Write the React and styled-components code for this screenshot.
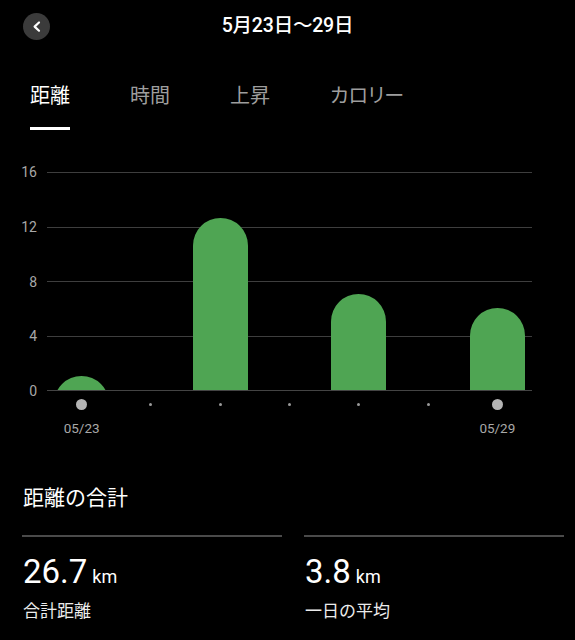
import React from 'react';
import styled, { createGlobalStyle } from 'styled-components';

const GlobalStyle = createGlobalStyle`
    body {
        margin: 0;
        background: #000;
        color: #fff;
        font-family: Roboto, "Noto Sans CJK JP", sans-serif;
    }
`;

const Page = styled.div`
    width: 575px;
    height: 640px;
    overflow: hidden;
    background: #000;
`;

const Header = styled.div`
    display: grid;
    grid-template-columns: 1fr auto 1fr;
    align-items: center;
    height: 52px;
    padding: 0 22px;
`;

const BackButton = styled.button`
    width: 27px;
    height: 27px;
    padding: 0;
    border: none;
    border-radius: 50%;
    background: #3b3b3b;
    display: flex;
    align-items: center;
    justify-content: center;
    margin-left: 1px;
`;

const Title = styled.div`
    font-size: 19.5px;
    font-weight: 500;
    line-height: 26px;
    letter-spacing: -0.2px;
`;

const Tabs = styled.div`
    display: flex;
    gap: 60px;
    padding-left: 30px;
    margin-top: 32px;
`;

const Tab = styled.div`
    font-size: 20px;
    line-height: 24px;
    padding-bottom: 19px;
    color: ${p => (p.$active ? '#fff' : '#9e9e9e')};
    border-bottom: 3px solid ${p => (p.$active ? '#fff' : 'transparent')};
    font-feature-settings: "palt";
`;

const Chart = styled.div`
    display: grid;
    grid-template-columns: 47px 485px;
    margin-top: 42px;
`;

const YAxis = styled.div`
    display: flex;
    flex-direction: column;
    justify-content: space-between;
    align-items: flex-end;
    height: 235px;
    margin: -8px 0;
    padding-right: 10px;
`;

const YLabel = styled.div`
    font-size: 14px;
    line-height: 16px;
    color: #a8a8a8;
`;

const Plot = styled.div`
    display: grid;
    height: 219px;
`;

const GridLayer = styled.div`
    grid-area: 1 / 1;
    display: flex;
    flex-direction: column;
    border-bottom: 1px solid #444;
`;

const GridBand = styled.div`
    flex: 1;
    border-top: 1px solid #3e3e3e;
`;

const BarLayer = styled.div`
    grid-area: 1 / 1;
    display: grid;
    grid-template-columns: repeat(7, 1fr);
    align-items: end;
    padding-bottom: 1px;
`;

const BarSlot = styled.div`
    display: flex;
    justify-content: center;
    align-items: flex-end;
`;

const BarClip = styled.div`
    width: 55px;
    overflow: hidden;
`;

const BarFill = styled.div`
    width: 55px;
    border-radius: 27.5px 27.5px 0 0;
    background: #4fa553;
`;

const Spacer = styled.div``;

const AxisRow = styled.div`
    grid-column: 2;
    display: grid;
    grid-template-columns: repeat(7, 1fr);
    align-items: center;
    justify-items: center;
    height: 12px;
    margin-top: 7px;
`;

const Dot = styled.div`
    width: ${p => (p.$big ? '11px' : '3px')};
    height: ${p => (p.$big ? '11px' : '3px')};
    border-radius: 50%;
    background: ${p => (p.$big ? '#b4b4b4' : '#9a9a9a')};
`;

const DateRow = styled.div`
    grid-column: 2;
    display: grid;
    grid-template-columns: repeat(7, 1fr);
    justify-items: center;
    margin-top: 10px;
`;

const DateLabel = styled.div`
    font-size: 13.5px;
    line-height: 16px;
    color: #a8a8a8;
`;

const Summary = styled.div`
    padding: 0 11px 0 22px;
    margin-top: 48px;
`;

const Heading = styled.div`
    font-size: 21px;
    line-height: 28px;
    padding-left: 1px;
`;

const Stats = styled.div`
    display: grid;
    grid-template-columns: 260px 260px;
    gap: 22px;
    margin-top: 23px;
`;

const Stat = styled.div`
    border-top: 2px solid #4a4a4a;
`;

const Value = styled.div`
    margin-top: 15px;
    font-size: 33px;
    line-height: 40px;
    display: flex;
    align-items: baseline;
    gap: 5px;
    padding-left: 1px;
`;

const Unit = styled.span`
    font-size: 18px;
`;

const StatLabel = styled.div`
    font-size: 17px;
    line-height: 22px;
    margin-top: 3px;
    padding-left: 1px;
    color: #ececec;
`;

const tabs = ['距離', '時間', '上昇', 'カロリー'];
const yLabels = [16, 12, 8, 4, 0];
// km per day, 05/23 .. 05/29
const days = [1.0, 0, 12.65, 0, 7.05, 0, 6.0];
const PX_PER_KM = 218 / 16;

function Bar({ value }) {
    const h = value * PX_PER_KM;
    return (
        <BarClip style={{ height: h }}>
            <BarFill style={{ height: Math.max(h, 55) }} />
        </BarClip>
    );
}

export default function App() {
    return (
        <Page>
            <GlobalStyle />
            <Header>
                <BackButton>
                    <svg width="27" height="27" viewBox="0 0 27 27">
                        <path d="M16 9.5 L11.6 13.6 L16 17.7" fill="none" stroke="#fff" strokeWidth="2.2" strokeLinecap="round" strokeLinejoin="round" />
                    </svg>
                </BackButton>
                <Title>5月23日〜29日</Title>
                <Spacer />
            </Header>

            <Tabs>
                {tabs.map((t, i) => (
                    <Tab key={t} $active={i === 0}>{t}</Tab>
                ))}
            </Tabs>

            <Chart>
                <YAxis>
                    {yLabels.map(v => <YLabel key={v}>{v}</YLabel>)}
                </YAxis>
                <Plot>
                    <GridLayer>
                        {[0, 1, 2, 3].map(i => <GridBand key={i} />)}
                    </GridLayer>
                    <BarLayer>
                        {days.map((v, i) => (
                            <BarSlot key={i}>{v > 0 && <Bar value={v} />}</BarSlot>
                        ))}
                    </BarLayer>
                </Plot>
                <AxisRow>
                    {days.map((_, i) => <Dot key={i} $big={i === 0 || i === 6} />)}
                </AxisRow>
                <DateRow>
                    <DateLabel>05/23</DateLabel>
                    <span /><span /><span /><span /><span />
                    <DateLabel>05/29</DateLabel>
                </DateRow>
            </Chart>

            <Summary>
                <Heading>距離の合計</Heading>
                <Stats>
                    <Stat>
                        <Value>26.7<Unit>km</Unit></Value>
                        <StatLabel>合計距離</StatLabel>
                    </Stat>
                    <Stat>
                        <Value>3.8<Unit>km</Unit></Value>
                        <StatLabel>一日の平均</StatLabel>
                    </Stat>
                </Stats>
            </Summary>
        </Page>
    );
}
